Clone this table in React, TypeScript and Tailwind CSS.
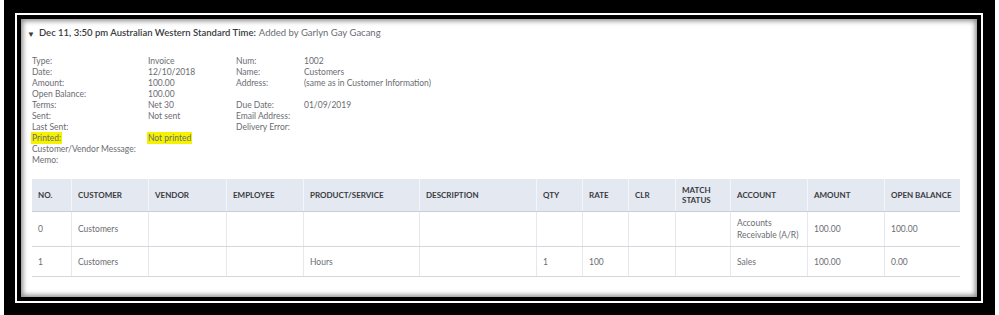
const details: [string, string, string, string][] = [
  ['Type:', 'Invoice', 'Num:', '1002'],
  ['Date:', '12/10/2018', 'Name:', 'Customers'],
  ['Amount:', '100.00', 'Address:', '(same as in Customer Information)'],
  ['Open Balance:', '100.00', '', ''],
  ['Terms:', 'Net 30', 'Due Date:', '01/09/2019'],
  ['Sent:', 'Not sent', 'Email Address:', ''],
  ['Last Sent:', '', 'Delivery Error:', ''],
  ['Printed:', 'Not printed', '', ''],
  ['Customer/Vendor Message:', '', '', ''],
  ['Memo:', '', '', ''],
];

const columns = [
  { label: 'NO.', w: 'w-[39px]' },
  { label: 'CUSTOMER', w: 'w-[77px]' },
  { label: 'VENDOR', w: 'w-[78px]' },
  { label: 'EMPLOYEE', w: 'w-[77px]' },
  { label: 'PRODUCT/SERVICE', w: 'w-[116px]' },
  { label: 'DESCRIPTION', w: 'w-[117px]' },
  { label: 'QTY', w: 'w-[46px]' },
  { label: 'RATE', w: 'w-[46px]' },
  { label: 'CLR', w: 'w-[47px]' },
  { label: 'MATCH STATUS', w: 'w-[55px]' },
  { label: 'ACCOUNT', w: 'w-[77px]' },
  { label: 'AMOUNT', w: 'w-[77px]' },
  { label: 'OPEN BALANCE', w: 'w-[76px]' },
];

const rows: string[][] = [
  ['0', 'Customers', '', '', '', '', '', '', '', '', 'Accounts Receivable (A/R)', '100.00', '100.00'],
  ['1', 'Customers', '', '', 'Hours', '', '1', '100', '', '', 'Sales', '100.00', '0.00'],
];

function Highlight({ text, on }: { text: string; on: boolean }) {
  if (!on || !text) return <>{text}</>;
  return <span className="bg-[#f5f200] -ml-[1px] pl-[1px] pr-[1px] py-[1px]">{text}</span>;
}

export default function App() {
  return (
    <div
      className="w-[999px] h-[315px] overflow-hidden bg-white"
      style={{ fontFamily: 'Lato, "Open Sans", sans-serif' }}
    >
      {/* outer black frame */}
      <div className="ml-[4px] w-[991px] h-[315px] bg-black pt-[13px] pl-[11px] pr-[12px] pb-[12px]">
        <div className="h-full bg-white p-[2px]">
          <div className="h-full border-[4px] border-black bg-white shadow-[inset_0_0_5px_2px_rgba(0,0,0,0.45)] pl-[6px] pr-[15px] pt-[8px]">
            {/* Header */}
            <div className="flex items-center h-[12px] text-[9.5px] leading-none text-[#393a3d]">
              <span className="text-[8px] mr-[4px] mt-[1px]">▼</span>
              <span className="font-semibold">Dec 11, 3:50 pm Australian Western Standard Time:</span>
              <span className="ml-[3px] text-[#6b6c72]">Added by Garlyn Gay Gacang</span>
            </div>

            {/* Details */}
            <div className="mt-[17px] pl-[5px] text-[8.5px] leading-[11px] text-[#6b6c72]">
              {details.map(([l1, v1, l2, v2]) => {
                const hl = l1 === 'Printed:';
                return (
                  <div key={l1} className="flex h-[11px]">
                    <div className="w-[116px]">
                      <Highlight text={l1} on={hl} />
                    </div>
                    <div className="w-[88px]">
                      <Highlight text={v1} on={hl} />
                    </div>
                    <div className="w-[68px]">{l2}</div>
                    <div>{v2}</div>
                  </div>
                );
              })}
            </div>

            {/* Table */}
            <div className="mt-[13px] ml-[5px] w-[928px]">
              <div className="flex h-[33px] bg-[#e3e8f1] border-b border-[#c9cdd4]">
                {columns.map((c, i) => (
                  <div
                    key={c.label}
                    className={`${c.w} flex items-center px-[6px] text-[8px] leading-[10px] font-bold text-[#393a3d] ${
                      i > 0 ? 'border-l border-[#f3f5f9]' : ''
                    }`}
                  >
                    {c.label === 'MATCH STATUS' ? (
                      <span>
                        MATCH
                        <br />
                        STATUS
                      </span>
                    ) : (
                      c.label
                    )}
                  </div>
                ))}
              </div>
              {rows.map((r, ri) => (
                <div
                  key={ri}
                  className={`flex ${ri === 0 ? 'h-[35px]' : 'h-[30px]'} border-b border-[#d4d7dc]`}
                >
                  {r.map((cell, i) => (
                    <div
                      key={i}
                      className={`${columns[i].w} flex items-center pl-[6px] pr-[3px] text-[8.5px] leading-[12px] text-[#6b6c72] ${
                        i > 0 ? 'border-l border-[#e6e8eb]' : ''
                      }`}
                    >
                      {cell}
                    </div>
                  ))}
                </div>
              ))}
            </div>
          </div>
        </div>
      </div>
    </div>
  );
}
